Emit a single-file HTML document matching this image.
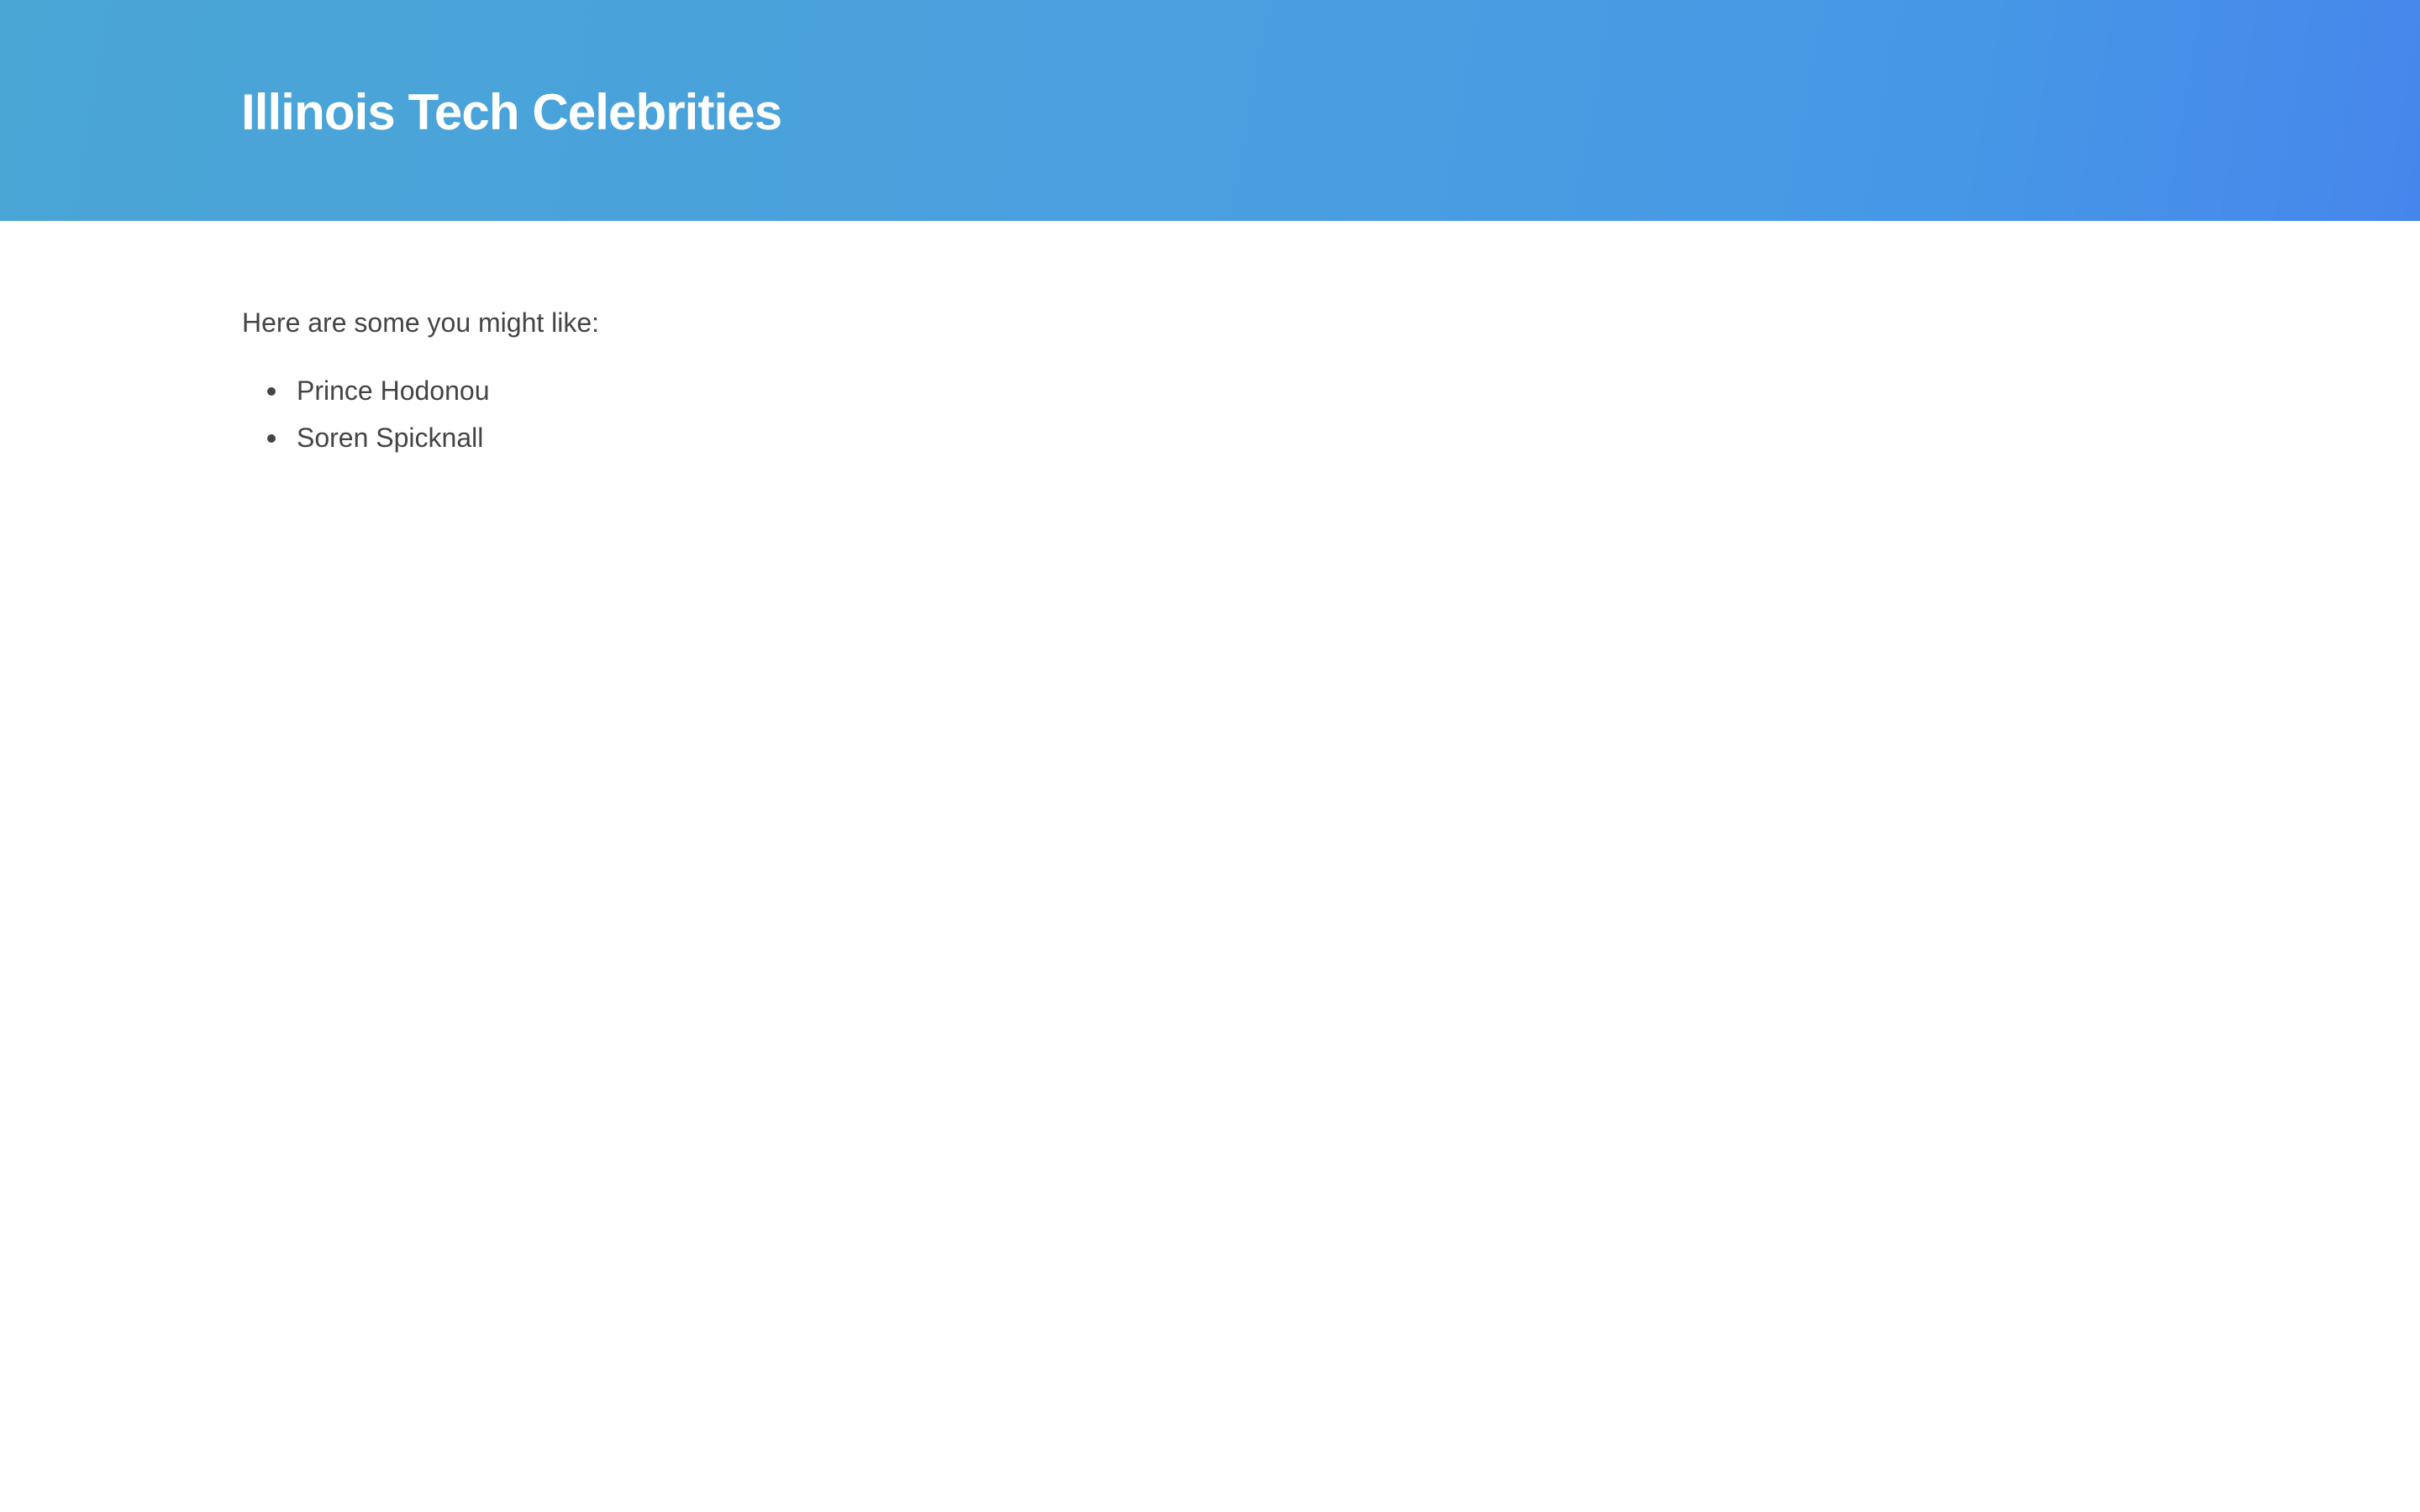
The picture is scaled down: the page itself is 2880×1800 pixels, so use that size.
<!DOCTYPE html>
<html><head><meta charset="utf-8"><style>
html,body{margin:0;padding:0;width:2880px;height:1800px;background:#fff;overflow:hidden}
body{font-family:"Liberation Sans",Arial,sans-serif}
.hdr{height:263px;background:linear-gradient(100deg,#4aa6d5 0%,#4a9fdf 50%,#4698e6 80%,#4686ec 100%);position:relative}
.hdr h1{position:absolute;left:287px;top:94px;margin:0;font-size:60px;line-height:80px;color:#fff;font-weight:bold;letter-spacing:-0.9px}
.c{position:absolute;left:288px;top:360px;color:#444;font-size:32px}
p{margin:0;line-height:48px}
ul{margin:0;padding:0;list-style:none}
li{position:relative;padding-left:65px;line-height:56px}
li:before{content:"";position:absolute;left:30px;top:24px;width:10px;height:10px;border-radius:50%;background:#444}
</style></head><body>
<div class="hdr"><h1>Illinois Tech Celebrities</h1></div>
<div class="c">
<p>Here are some you might like:</p>
<ul style="margin-top:29px"><li>Prince Hodonou</li><li>Soren Spicknall</li></ul>
</div>
</body></html>
